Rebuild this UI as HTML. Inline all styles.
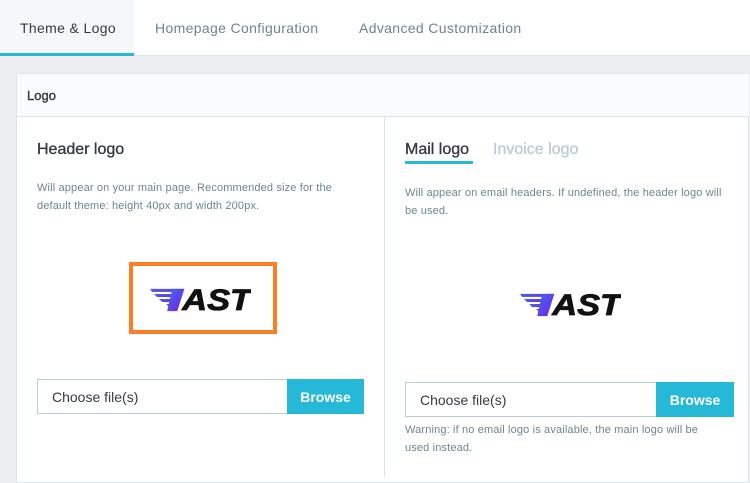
<!DOCTYPE html>
<html><head><style>
*{margin:0;padding:0;box-sizing:border-box}
body{width:750px;height:476px;overflow:hidden;background:#eceeef;font-family:"Liberation Sans",sans-serif;position:relative}
.abs{position:absolute}
.tabs{left:0;top:0;width:750px;height:56px;background:#fff;border-bottom:1px solid #dfe3e5}
.tab{top:0;height:56px;line-height:56px;font-size:14px;letter-spacing:0.35px;color:#6c868e}
.card{left:16px;top:73px;width:733px;height:410px;background:#fff;border:1px solid #dbe6e9;border-radius:4px 4px 0 0}
.desc{font-size:11px;color:#6c868e;line-height:18px;letter-spacing:0.15px}
.h{font-size:16px;color:#363a41;-webkit-text-stroke:0.35px #363a41}
.inp{border:1px solid #bbcdd2;background:#fff;font-size:14px;color:#363a41;padding-left:14px;display:flex;align-items:center}
.btn{background:#25b9d7;color:#fff;font-weight:bold;font-size:14px;display:flex;align-items:center;justify-content:center}
</style></head><body>
<div class="abs tabs"></div>
<div class="abs" style="left:0;top:0;width:134px;height:56px;background:#f4f8fb;border-bottom:3px solid #25b9d7"></div>
<div class="abs tab" style="left:20px;color:#363a41">Theme &amp; Logo</div>
<div class="abs tab" style="left:155px">Homepage Configuration</div>
<div class="abs tab" style="left:359px">Advanced Customization</div>

<div class="abs card"></div>
<div class="abs" style="left:17px;top:74px;width:732px;height:43px;background:#fafbfc;border-bottom:1px solid #dbe6e9"></div>
<div class="abs" style="left:27px;top:88px;font-size:13px;color:#363a41;-webkit-text-stroke:0.4px #363a41">Logo</div>
<div class="abs" style="left:384px;top:117px;width:1px;height:360px;background:#dbe6e9"></div>

<div class="abs h" style="left:37px;top:141px">Header logo</div>
<div class="abs desc" style="left:37px;top:179px;width:318px">Will appear on your main page. Recommended size for the default theme: height 40px and width 200px.</div>
<div class="abs" style="left:129px;top:262px;width:148px;height:72px;border:4px solid #fd7e22"></div>
<svg class="abs" style="left:150px;top:285px" width="101" height="28" viewBox="0 0 100 26"><defs><linearGradient id="g" x1="0" y1="0" x2="1" y2="1"><stop offset="0" stop-color="#3b6cf6"/><stop offset="1" stop-color="#7b1fd6"/></linearGradient></defs><g fill="url(#g)"><path d="M0 3H34L33 6H2Z"/><path d="M4 8H32L31 11H7Z"/><path d="M9 13H29L28 16H12Z"/><path d="M16 18H23L22 21H19Z"/><path d="M22 3H34L27 25H17Z"/></g><text x="32" y="24" textLength="68" lengthAdjust="spacingAndGlyphs" font-family="Liberation Sans,sans-serif" font-weight="bold" font-style="italic" font-size="29" fill="#111" stroke="#111" stroke-width="0.8">AST</text></svg>
<div class="abs inp" style="left:37px;top:379px;width:251px;height:35px">Choose file(s)</div>
<div class="abs btn" style="left:287px;top:379px;width:77px;height:35px">Browse</div>

<div class="abs h" style="left:405px;top:141px">Mail logo</div>
<div class="abs" style="left:405px;top:161px;width:68px;height:3px;background:#25b9d7"></div>
<div class="abs h" style="left:493px;top:141px;color:#bbcdd2;-webkit-text-stroke:0.35px #bbcdd2">Invoice logo</div>
<div class="abs desc" style="left:405px;top:184px;width:322px">Will appear on email headers. If undefined, the header logo will be used.</div>
<svg class="abs" style="left:520px;top:290px" width="101" height="28" viewBox="0 0 100 26"><g fill="url(#g)"><path d="M0 3H34L33 6H2Z"/><path d="M4 8H32L31 11H7Z"/><path d="M9 13H29L28 16H12Z"/><path d="M16 18H23L22 21H19Z"/><path d="M22 3H34L27 25H17Z"/></g><text x="32" y="24" textLength="68" lengthAdjust="spacingAndGlyphs" font-family="Liberation Sans,sans-serif" font-weight="bold" font-style="italic" font-size="29" fill="#111" stroke="#111" stroke-width="0.8">AST</text></svg>
<div class="abs inp" style="left:405px;top:382px;width:252px;height:35px">Choose file(s)</div>
<div class="abs btn" style="left:656px;top:382px;width:78px;height:35px">Browse</div>
<div class="abs desc" style="left:405px;top:421px;width:318px">Warning: if no email logo is available, the main logo will be used instead.</div>
</body></html>
